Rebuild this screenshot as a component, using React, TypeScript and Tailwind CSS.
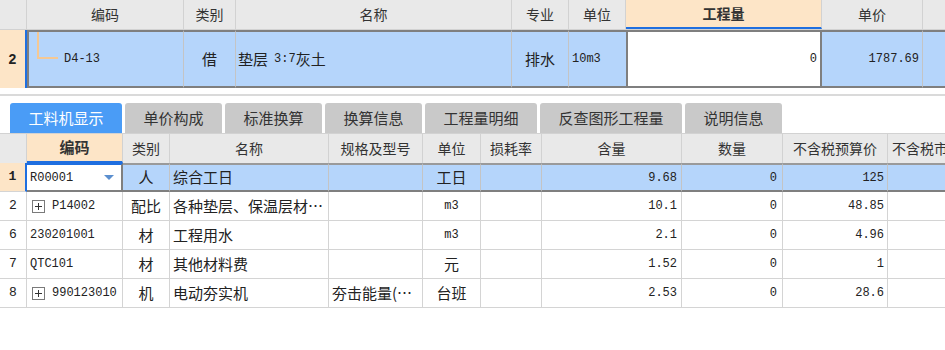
import React from 'react'

// grid sheet styled like a desktop budgeting tool

const hd = "shrink-0 h-full flex items-center justify-center bg-[#e9e9e9] border-r border-[#d2d2d2] text-[14px] text-[#333]"
const mono = "font-['Liberation_Mono','Noto_Sans_CJK_SC',monospace] text-[12px]"

function TopTable() {
    return (
        <div className="w-[945px] overflow-hidden">
            <div className="flex h-[30px] border-b border-[#d2d2d2]">
                <div className={cn(hd, "w-[27px]")} />
                <div className={cn(hd, "w-[157px]")}>编码</div>
                <div className={cn(hd, "w-[52px]")}>类别</div>
                <div className={cn(hd, "w-[276px]")}>名称</div>
                <div className={cn(hd, "w-[57px]")}>专业</div>
                <div className={cn(hd, "w-[57px]")}>单位</div>
                <div className={cn(hd, "w-[196px] bg-[#fde5c7] font-bold border-b-2 border-b-[#1f6fe0]")}>工程量</div>
                <div className={cn(hd, "w-[101px]")}>单价</div>
                <div className={cn(hd, "w-[100px]")} />
            </div>
            <div className="flex h-[58px] text-[15px] text-[#222]">
                <div className="w-[27px] shrink-0 flex items-center justify-center bg-[#fde5c7] border-r-2 border-r-[#1f6fe0] font-bold text-[14px] font-['Liberation_Sans',sans-serif]">2</div>
                <div className="w-[157px] shrink-0 h-full flex bg-[#b5d5fb] border-y-2 border-y-[#7f7f7f] border-l-2 border-l-[#7f7f7f] border-r border-r-[#c4c4c4]">
                    <div className="ml-[8px] w-[21px] h-[27px] shrink-0 border-l-2 border-b-2 border-[#f5c893]" />
                    <span className={cn(mono, "ml-[6px] self-center")}>D4-13</span>
                </div>
                <div className="w-[52px] shrink-0 flex items-center justify-center bg-[#b5d5fb] border-y-2 border-y-[#7f7f7f] border-r border-r-[#c4c4c4]">借</div>
                <div className="w-[276px] shrink-0 flex items-center pl-[2px] bg-[#b5d5fb] border-y-2 border-y-[#7f7f7f] border-r border-r-[#c4c4c4]">
                    垫层<span className={cn(mono, "ml-[6px]")}>3:7</span>灰土
                </div>
                <div className="w-[57px] shrink-0 flex items-center justify-center bg-[#b5d5fb] border-y-2 border-y-[#7f7f7f] border-r border-r-[#c4c4c4]">排水</div>
                <div className={cn(mono, "w-[57px] shrink-0 flex items-center pl-[3px] bg-[#b5d5fb] border-y-2 border-y-[#7f7f7f]")}>10m3</div>
                <div className={cn(mono, "w-[196px] shrink-0 flex items-center justify-end pr-[3px] bg-white border-2 border-[#7f7f7f]")}>0</div>
                <div className={cn(mono, "w-[101px] shrink-0 flex items-center justify-end pr-[3px] bg-[#b5d5fb] border-y-2 border-y-[#7f7f7f] border-r border-r-[#c4c4c4]")}>1787.69</div>
                <div className="w-[100px] shrink-0 bg-[#b5d5fb] border-y-2 border-y-[#7f7f7f]" />
            </div>
        </div>
    )
}

const tabs = [
    { label: '工料机显示', w: 'w-[112px]', active: true },
    { label: '单价构成', w: 'w-[97px]' },
    { label: '标准换算', w: 'w-[97px]' },
    { label: '换算信息', w: 'w-[97px]' },
    { label: '工程量明细', w: 'w-[112px]' },
    { label: '反查图形工程量', w: 'w-[142px]' },
    { label: '说明信息', w: 'w-[97px]' },
]

function Tabs() {
    return (
        <div className="flex gap-[3px] pl-[10px] h-[30px]">
            {tabs.map(t => (
                <div
                    key={t.label}
                    className={cn(
                        t.w,
                        "h-full rounded-t-[3px] flex items-center justify-center text-[15px]",
                        t.active ? "bg-[#4a9cf6] text-white" : "bg-[#c9c9c9] text-[#333]"
                    )}
                >
                    {t.label}
                </div>
            ))}
        </div>
    )
}

type Row = {
    no: string
    code: string
    plus?: boolean
    kind: string
    name: string
    spec: string
    unit: string
    unitMono?: boolean
    qty: string
    num: string
    price: string
}

const rows: Row[] = [
    { no: '1', code: 'R00001', kind: '人', name: '综合工日', spec: '', unit: '工日', qty: '9.68', num: '0', price: '125' },
    { no: '2', code: 'P14002', plus: true, kind: '配比', name: '各种垫层、保温层材…', spec: '', unit: 'm3', unitMono: true, qty: '10.1', num: '0', price: '48.85' },
    { no: '6', code: '230201001', kind: '材', name: '工程用水', spec: '', unit: 'm3', unitMono: true, qty: '2.1', num: '0', price: '4.96' },
    { no: '7', code: 'QTC101', kind: '材', name: '其他材料费', spec: '', unit: '元', qty: '1.52', num: '0', price: '1' },
    { no: '8', code: '990123010', plus: true, kind: '机', name: '电动夯实机', spec: '夯击能量(…', unit: '台班', qty: '2.53', num: '0', price: '28.6' },
]

function PlusBox() {
    return (
        <span className="w-[13px] h-[13px] shrink-0 border border-[#7a7a7a] flex items-center justify-center bg-white">
            <svg width="9" height="9" viewBox="0 0 9 9">
                <path d="M4.5 1v7M1 4.5h7" stroke="#333" strokeWidth="1" />
            </svg>
        </span>
    )
}

function BottomTable() {
    return (
        <div className="w-[945px] overflow-hidden border-t border-[#d2d2d2]">
            <div className="flex h-[29px]">
                <div className={cn(hd, "w-[27px]")} />
                <div className={cn(hd, "w-[96px] bg-[#fde5c7] font-bold text-[15px] border-b-2 border-b-[#1f6fe0]")}>编码</div>
                <div className={cn(hd, "w-[47px]")}>类别</div>
                <div className={cn(hd, "w-[159px]")}>名称</div>
                <div className={cn(hd, "w-[94px]")}>规格及型号</div>
                <div className={cn(hd, "w-[58px]")}>单位</div>
                <div className={cn(hd, "w-[61px]")}>损耗率</div>
                <div className={cn(hd, "w-[140px]")}>含量</div>
                <div className={cn(hd, "w-[101px]")}>数量</div>
                <div className={cn(hd, "w-[105px]")}>不含税预算价</div>
                <div className={cn(hd, "w-[112px] justify-start pl-[4px]")}>不含税市场价</div>
            </div>
            {rows.map((r, i) => {
                const sel = i === 0
                const c = sel
                    ? "bg-[#b5d5fb] border-t-2 border-t-[#9a9a9a] border-b-2 border-b-[#7f7f7f] border-r border-r-[#c4c4c4]"
                    : "bg-white border-b border-r border-[#d4d4d4]"
                return (
                    <div key={r.no} className="flex h-[29px] text-[15px] text-[#222]">
                        <div className={cn(
                            mono,
                            "w-[27px] shrink-0 flex items-center justify-center text-[13px]",
                            sel ? "bg-[#fde5c7] font-bold border-r-2 border-r-[#1f6fe0] border-b border-b-[#d4d4d4]" : "bg-white border-b border-r border-[#d4d4d4]"
                        )}>{r.no}</div>
                        <div className={cn(
                            "w-[96px] shrink-0 flex items-center",
                            sel ? "bg-white border-t-2 border-t-[#1f6fe0] border-b-2 border-b-[#7f7f7f] border-r-2 border-r-[#7f7f7f] pl-[3px]" : "bg-white border-b border-r border-[#d4d4d4]",
                            r.plus ? "pl-[5px] gap-[7px]" : !sel ? "pl-[3px]" : ""
                        )}>
                            {r.plus && <PlusBox />}
                            <span className={mono}>{r.code}</span>
                            {sel && (
                                <svg className="ml-auto mr-[7px]" width="10" height="6" viewBox="0 0 10 6">
                                    <path d="M0 0h10L5 5z" fill="#5b8fcf" />
                                </svg>
                            )}
                        </div>
                        <div className={cn(c, "w-[47px] shrink-0 flex items-center justify-center")}>{r.kind}</div>
                        <div className={cn(c, "w-[159px] shrink-0 flex items-center pl-[3px] whitespace-nowrap overflow-hidden")}>{r.name}</div>
                        <div className={cn(c, "w-[94px] shrink-0 flex items-center pl-[3px] whitespace-nowrap overflow-hidden")}>{r.spec}</div>
                        <div className={cn(c, "w-[58px] shrink-0 flex items-center justify-center", r.unitMono ? mono : "")}>{r.unit}</div>
                        <div className={cn(c, "w-[61px] shrink-0")} />
                        <div className={cn(c, mono, "w-[140px] shrink-0 flex items-center justify-end pr-[4px]")}>{r.qty}</div>
                        <div className={cn(c, mono, "w-[101px] shrink-0 flex items-center justify-end pr-[5px]")}>{r.num}</div>
                        <div className={cn(c, mono, "w-[105px] shrink-0 flex items-center justify-end pr-[3px]")}>{r.price}</div>
                        <div className={cn(c, "w-[112px] shrink-0")} />
                    </div>
                )
            })}
        </div>
    )
}

export default function App() {
    return (
        <div className="w-[945px] h-[350px] overflow-hidden bg-white font-['Noto_Sans_CJK_SC','Noto_Sans',sans-serif] select-none">
            <TopTable />
            <div className="h-[6px]" />
            <div className="h-[2px] bg-[#dadada]" />
            <div className="h-[7px]" />
            <Tabs />
            <BottomTable />
        </div>
    )
}

function cn(...inputs: any[]) {
    return inputs.filter(Boolean).join(' ')
}
